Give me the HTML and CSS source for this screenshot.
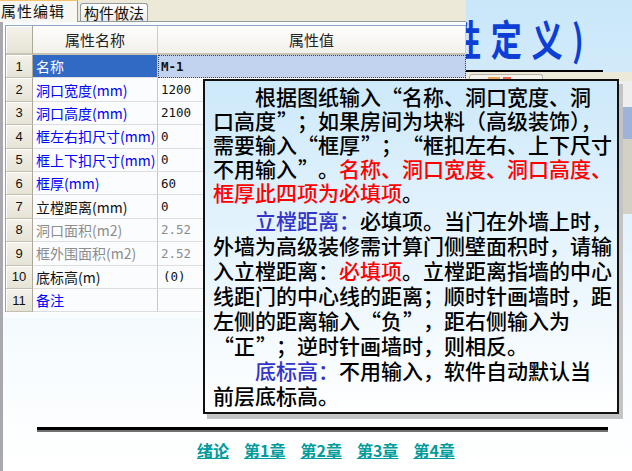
FILE: index.html
```html
<!DOCTYPE html>
<html lang="zh-CN">
<head>
<meta charset="utf-8">
<title>门的属性定义</title>
<link rel="stylesheet" href="styles.css">
</head>
<body>
<div class="slide">
  <div class="top">
    <section class="panel">
      <div class="tabs">
        <span class="tab active">属性编辑</span>
        <span class="tab idle">构件做法</span>
      </div>
      <div class="panel-body">
        <div class="grid">
          <div class="c hd num"></div>
          <div class="c hd">属性名称</div>
          <div class="c hd">属性值</div>

          <div class="c num">1</div>
          <div class="c n sel-n">名称</div>
          <div class="c v sel-v">M-1</div>

          <div class="c num">2</div>
          <div class="c n blue">洞口宽度(mm)</div>
          <div class="c v">1200</div>

          <div class="c num">3</div>
          <div class="c n blue">洞口高度(mm)</div>
          <div class="c v">2100</div>

          <div class="c num">4</div>
          <div class="c n blue">框左右扣尺寸(mm)</div>
          <div class="c v">0</div>

          <div class="c num">5</div>
          <div class="c n blue">框上下扣尺寸(mm)</div>
          <div class="c v">0</div>

          <div class="c num">6</div>
          <div class="c n blue">框厚(mm)</div>
          <div class="c v">60</div>

          <div class="c num">7</div>
          <div class="c n">立樘距离(mm)</div>
          <div class="c v">0</div>

          <div class="c num">8</div>
          <div class="c n gray">洞口面积(m2)</div>
          <div class="c v gray">2.52</div>

          <div class="c num">9</div>
          <div class="c n gray">框外围面积(m2)</div>
          <div class="c v gray">2.52</div>

          <div class="c num">10</div>
          <div class="c n">底标高(m)</div>
          <div class="c v shift">(0)</div>

          <div class="c num">11</div>
          <div class="c n blue">备注</div>
          <div class="c v"></div>
        </div>
      </div>
    </section>
    <div class="title"><h1>性定义)</h1></div>
  </div>

  <div class="bgwin">
    <div class="bw-bar"><span class="bw-tab"><i class="dot o"></i><i class="dot r"></i></span></div>
    <div class="bw-body"><div class="bw-scroll"></div></div>
  </div>

  <div class="callout">
    <p class="p1">　　根据图纸输入<span class="qo">“</span>名称、洞口宽度、洞<br>口高度<span class="qc">”</span>；如果房间为块料（高级装饰），<br>需要输入<span class="qo">“</span>框厚<span class="qc">”</span>；<span class="qo">“</span>框扣左右、上下尺寸<br>不用输入<span class="qc">”</span>。<span class="red">名称、洞口宽度、洞口高度、<br>框厚此四项为必填项</span>。</p>
    <p class="p2">　　<span class="bl">立樘距离：</span>必填项。当门在外墙上时，<br>外墙为高级装修需计算门侧壁面积时，请输<br>入立樘距离：<span class="red">必填项</span>。立樘距离指墙的中心<br>线距门的中心线的距离；顺时针画墙时，距<br>左侧的距离输入<span class="qo">“</span>负<span class="qc">”</span>，距右侧输入为<br><span class="qo">“</span>正<span class="qc">”</span>；逆时针画墙时，则相反。</p>
    <p class="p2">　　<span class="bl">底标高：</span>不用输入，软件自动默认当<br>前层底标高。</p>
  </div>

  <footer class="foot">
    <div class="rule"></div>
    <nav class="nav">
      <a href="#">绪论</a>
      <a href="#">第1章</a>
      <a href="#">第2章</a>
      <a href="#">第3章</a>
      <a href="#">第4章</a>
    </nav>
  </footer>
</div>
</body>
</html>
```

FILE: styles.css
```css
* { box-sizing: border-box; }
html, body { margin: 0; padding: 0; }
body {
  width: 632px;
  height: 471px;
  overflow: hidden;
  font-family: "Noto Sans CJK SC", "Liberation Sans", sans-serif;
}

.slide {
  position: relative;
  width: 632px;
  height: 471px;
  overflow: hidden;
  background:
    linear-gradient(to right, #a8a8ae 0, #a8a8ae 3px, transparent 3px),
    linear-gradient(to bottom, #c9e7f9 0%, #e2f1fc 45%, #f6fbfe 72%, #ffffff 100%);
}

/* ---------- top: panel + title ---------- */
.top {
  display: flex;
  align-items: flex-start;
  height: 318px;
}

.panel {
  position: relative;
  z-index: 1;
  width: 466px;
  height: 318px;
  display: flex;
  flex-direction: column;
  flex: none;
}

.tabs {
  height: 22px;
  display: flex;
  align-items: flex-end;
  background: #ece9d8;
  border-bottom: 1px solid #919b9c;
}

.tab {
  font-size: 15px;
  line-height: 17px;
  letter-spacing: 1px;
  color: #111;
  white-space: nowrap;
}

.tab.active {
  width: 78px;
  height: 22px;
  margin-bottom: -1px;
  padding: 1px 0 0 1px;
  background: #f7f6f1;
  border-top: 1px solid #f5c46a;
  border-right: 1px solid #919b9c;
}

.tab.idle {
  width: 68px;
  height: 18px;
  margin-left: 2px;
  padding: 0 0 0 3px;
  letter-spacing: 0;
  border: 1px solid #919b9c;
  border-bottom: none;
  border-radius: 3px 3px 0 0;
  background: linear-gradient(#ffffff, #ecebe5);
}

.panel-body {
  flex: 1;
  margin-left: 3px;
  padding: 3px 0 0 2px;
  background: #fbfcfd;
}

.grid {
  display: grid;
  grid-template-columns: 27px 125px 1fr;
  grid-template-rows: 29px repeat(11, 23.4px);
  border-left: 1px solid #8ea5c4;
  border-top: 1px solid #8ea5c4;
}

.c {
  display: flex;
  align-items: center;
  padding-left: 3px;
  font-size: 14px;
  color: #111;
  white-space: nowrap;
  overflow: hidden;
  border-right: 1px solid #c8c8c8;
  border-bottom: 1px solid #dedede;
}

.hd {
  justify-content: center;
  padding-left: 0;
  font-size: 15px;
  color: #222;
  background: linear-gradient(#fefefd, #f1f0ea);
  border-right: 1px solid #d2cfc2;
  border-bottom: 2px solid #c6c3b3;
}

.num {
  justify-content: center;
  padding-left: 0;
  font-family: "Liberation Sans", sans-serif;
  font-size: 13px;
  color: #111;
  background: linear-gradient(#f4f2ea, #e6e3d6);
  border-right: 1px solid #aca899;
  border-bottom: 1px solid #c4c0b0;
  box-shadow: inset 1px 1px 0 #ffffff;
}

.hd.num {
  background: linear-gradient(#f4f2ea, #e6e3d6);
  border-bottom: 2px solid #c6c3b3;
}

.v {
  font-family: "DejaVu Sans Mono", monospace;
  font-size: 12.5px;
}

.v.shift { padding-left: 5px; }

.blue { color: #0000ff; }
.gray { color: #8c8c8c; }

.sel-n {
  background: #316ac5;
  color: #ffffff;
}

.sel-v {
  background: #c1d3ee;
  font-weight: bold;
  outline: 1px dotted #444;
  outline-offset: -1px;
}

/* ---------- title ---------- */
.title {
  width: 137px;
  height: 72px;
  border-bottom: 2px solid #000;
  flex: none;
}

.title h1 {
  margin: 16px 0 0 -16px;
  font-size: 42px;
  line-height: 44px;
  font-weight: 700;
  color: #0d3fd6;
  letter-spacing: 13px;
  white-space: nowrap;
  transform: scaleX(0.74);
  transform-origin: left top;
}

/* ---------- window behind the callout ---------- */
.bgwin {
  position: absolute;
  left: 466px;
  top: 72px;
  width: 166px;
  height: 142px;
  display: flex;
  flex-direction: column;
  background: #dcd9ce;
}

.bw-bar {
  height: 9px;
  display: flex;
  align-items: flex-end;
  background: #ece9d8;
}

.bw-tab {
  display: flex;
  align-items: center;
  gap: 3px;
  width: 74px;
  height: 7px;
  margin-left: 3px;
  padding-left: 18px;
  border: 1px solid #b8b5a8;
  border-bottom: none;
  border-radius: 3px 3px 0 0;
  background: #f3f2ec;
}

.dot { display: block; height: 3px; }
.dot.o { width: 12px; background: #f0a860; }
.dot.r { width: 8px; background: #e86a5a; }

.bw-body {
  flex: 1;
  display: flex;
  justify-content: flex-end;
}

.bw-scroll {
  width: 13px;
  border-left: 1px solid #ffffff;
  background: linear-gradient(to bottom,
    #eeeeee 0, #eeeeee 26px,
    #9db4d8 26px, #9db4d8 58px,
    #d3d0c6 58px);
}

/* ---------- callout ---------- */
.callout {
  position: absolute;
  z-index: 2;
  left: 203px;
  top: 79px;
  width: 416px;
  height: 335px;
  padding: 3px 2px 0 8px;
  border: 2px solid #111;
  background: linear-gradient(to bottom, #cde9fa 0%, #e6f4fd 50%, #ffffff 100%);
  box-shadow: 4px 5px 0 #c4c4c4;
  font-family: "Noto Sans CJK SC", sans-serif;
  font-size: 21px;
  font-weight: 500;
  color: #000;
  white-space: nowrap;
}

.callout p { margin: 0; }
.p1 { line-height: 24px; }
.p2 { line-height: 25px; }
.p1 + .p2 { margin-top: 3.5px; }

.qo, .qc {
  display: inline-block;
  width: 1em;
}
.qo { text-align: right; padding-right: 1px; }
.qc { text-align: left; padding-left: 1px; }

.red { color: #ff0000; }
.bl { color: #3434c8; }

/* ---------- footer ---------- */
.foot {
  padding-top: 109px;
}

.rule {
  margin: 0 24px 0 37px;
  height: 5px;
  border-top: 3px solid #000;
  border-bottom: 2px solid #707070;
}

.nav {
  display: flex;
  gap: 15px;
  padding-left: 197px;
  margin-top: 8px;
}

.nav a {
  font-family: "Noto Sans CJK SC", sans-serif;
  font-size: 16px;
  line-height: 20px;
  font-weight: 700;
  color: #009b9b;
  text-decoration: underline;
}
```
